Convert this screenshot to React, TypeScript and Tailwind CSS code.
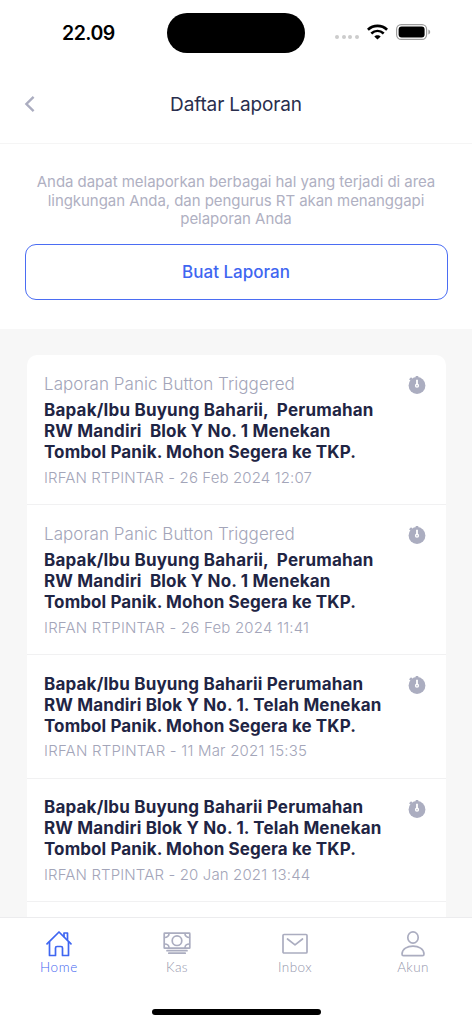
import type { ReactNode } from 'react'
import clsx from 'clsx'

interface Line {
  text: string
  tracking: string
}

interface Laporan {
  id: number
  judul?: Line
  isi: Line[]
  meta: Line
}

const DESKRIPSI: Line[] = [
  { text: 'Anda dapat melaporkan berbagai hal yang terjadi di area', tracking: 'tracking-[-0.05px]' },
  { text: 'lingkungan Anda, dan pengurus RT akan menanggapi', tracking: 'tracking-[-0.05px]' },
  { text: 'pelaporan Anda', tracking: 'tracking-[-0.05px]' },
]

const JUDUL: Line = { text: 'Laporan Panic Button Triggered', tracking: 'tracking-[0.04px]' }

const ISI_BARU: Line[] = [
  { text: 'Bapak/Ibu Buyung Baharii,  Perumahan', tracking: 'tracking-[0.2px]' },
  { text: 'RW Mandiri  Blok Y No. 1 Menekan', tracking: 'tracking-[0.15px]' },
  { text: 'Tombol Panik. Mohon Segera ke TKP.', tracking: 'tracking-[0.1px]' },
]

const ISI_LAMA: Line[] = [
  { text: 'Bapak/Ibu Buyung Baharii Perumahan', tracking: 'tracking-[0.18px]' },
  { text: 'RW Mandiri Blok Y No. 1. Telah Menekan', tracking: 'tracking-[0.14px]' },
  { text: 'Tombol Panik. Mohon Segera ke TKP.', tracking: 'tracking-[0.1px]' },
]

const LAPORAN: Laporan[] = [
  { id: 1, judul: JUDUL, isi: ISI_BARU, meta: { text: 'IRFAN RTPINTAR - 26 Feb 2024 12:07', tracking: 'tracking-[0.12px]' } },
  { id: 2, judul: JUDUL, isi: ISI_BARU, meta: { text: 'IRFAN RTPINTAR - 26 Feb 2024 11:41', tracking: 'tracking-[0.2px]' } },
  { id: 3, isi: ISI_LAMA, meta: { text: 'IRFAN RTPINTAR - 11 Mar 2021 15:35', tracking: 'tracking-[0.22px]' } },
  { id: 4, isi: ISI_LAMA, meta: { text: 'IRFAN RTPINTAR - 20 Jan 2021 13:44', tracking: 'tracking-[0.13px]' } },
]

function StatusBar() {
  return (
    <div className="flex h-[65px] shrink-0 items-center">
      <div className="w-[167px] pl-[62px] text-[19.5px] font-semibold leading-6 tracking-[-0.5px] text-black">22.09</div>
      <div className="h-10 w-[138px] rounded-full bg-black" />
      <div className="flex flex-1 items-center pl-[30px]">
        <div className="mt-[9px] flex gap-[2.5px]">
          {[0, 1, 2, 3].map((i) => (
            <span key={i} className="h-1 w-1 rounded-full bg-[#cccccc]" />
          ))}
        </div>
        <svg className="mb-[2px] ml-2 h-[16px] w-[21px]" viewBox="0 0 21 16" fill="none">
          <path d="M.9 5.700C6.400.7 14.600.7 20.100 5.700" stroke="#000" strokeWidth="2.800" />
          <path d="M4.300 9.500C8 6.200 13 6.200 16.700 9.500" stroke="#000" strokeWidth="2.600" />
          <path d="M7.300 12.400C9 10.700 12 10.700 13.700 12.400L10.500 15.600Z" fill="#000" />
        </svg>
        <svg className="mb-[2px] ml-[8px] h-4 w-[35px]" viewBox="0 0 35 16" fill="none">
          <rect x=".6" y=".6" width="30" height="14.800" rx="4.600" stroke="#9d9d9d" strokeWidth="1.200" />
          <rect x="2.600" y="2.500" width="26" height="11" rx="3" fill="#000" />
          <path d="M32.400 5.500C34.800 6.500 34.800 9.500 32.400 10.500Z" fill="#9d9d9d" />
        </svg>
      </div>
    </div>
  )
}

function StopwatchIcon() {
  return (
    <svg className="h-[18px] w-[18px] shrink-0" viewBox="0 0 18 18" fill="none">
      <circle cx="9" cy="9.500" r="8.400" fill="#abadc0" />
      <path d="M7.700 0H10.300V2.500H7.700Z" fill="#abadc0" />
      <path d="M1.800 4L3.800 2" stroke="#abadc0" strokeWidth="2" />
      <path d="M9 3.800V8.500" stroke="#fff" strokeWidth="1.800" />
      <circle cx="9" cy="9.700" r="1.400" stroke="#fff" strokeWidth="1.400" />
    </svg>
  )
}

function LaporanItem({ item }: { item: Laporan }) {
  return (
    <div
      className={clsx(
        'flex shrink-0 justify-between border-b-[1.5px] border-[#f1f1f2] pl-[17.5px] pr-5 pt-[18.5px]',
        item.judul ? 'h-[150px]' : 'h-[123.5px]',
      )}
    >
      <div className="whitespace-pre">
        {item.judul && (
          <div className={clsx('mb-[5.5px] text-[17px] font-light leading-[21px] text-[#a3a5b9]', item.judul.tracking)}>{item.judul.text}</div>
        )}
        {item.isi.map((line) => (
          <div key={line.text} className={clsx('text-[17px] font-bold leading-[21px] text-[#1f2544]', line.tracking)}>
            {line.text}
          </div>
        ))}
        <div className={clsx('mt-[4.5px] text-[15px] font-light leading-[19px] text-[#a3a5b9]', item.meta.tracking)}>{item.meta.text}</div>
      </div>
      <div className="pt-[2.5px]">
        <StopwatchIcon />
      </div>
    </div>
  )
}

function NavItem({ label, active, tracking, children }: { label: string; active?: boolean; tracking: string; children: ReactNode }) {
  return (
    <button type="button" className={clsx('flex flex-1 flex-col items-center', active ? 'text-[#3f66f1]' : 'text-[#abadc0]')}>
      <svg className="h-7 w-7" viewBox="0 0 28 28" fill="none" stroke="currentColor" strokeWidth="1.700" strokeLinecap="round" strokeLinejoin="round">
        {children}
      </svg>
      <span
        className={clsx(
          "mt-px font-['Lato',sans-serif] text-[13.5px] font-light leading-4",
          active ? 'text-[#3f66f1]' : 'text-[#9496ac]',
          tracking,
        )}
      >
        {label}
      </span>
    </button>
  )
}

export default function App() {
  return (
    <div className="flex h-[1024px] w-[472px] flex-col overflow-hidden bg-white font-['Inter','Liberation_Sans',sans-serif]">
      <StatusBar />

      <header className="flex h-[78.5px] shrink-0 items-center border-b-[1.5px] border-[#f5f5f5] pl-[24px] pr-[36px]">
        <svg className="h-[18px] w-3" viewBox="0 0 12 18" fill="none">
          <path d="M9.600 1.800L2.400 9L9.600 16.200" stroke="#abadc0" strokeWidth="2.400" />
        </svg>
        <h1 className="flex-1 pt-0.5 text-center text-[19px] leading-6 tracking-[-0.13px] text-[#292e4d]">Daftar Laporan</h1>
      </header>

      <section className="flex h-[185.5px] shrink-0 flex-col px-[24.5px] pt-[29.5px]">
        <div className="whitespace-pre text-center text-[15px] leading-[18.500px] text-[#afb0c2]">
          {DESKRIPSI.map((line) => (
            <p key={line.text} className={line.tracking}>{line.text}</p>
          ))}
        </div>
        <button
          type="button"
          className="mt-[15.500px] h-14 shrink-0 rounded-[11px] border-[1.500px] border-[#4b6df3] pt-0.5 text-[17px] font-medium text-[#3f66f1]"
        >
          Buat Laporan
        </button>
      </section>

      <main className="flex min-h-0 flex-1 flex-col overflow-hidden bg-[#f7f7f7] px-[26.5px] pt-[26px]">
        <div className="flex min-h-0 flex-1 flex-col overflow-hidden rounded-t-[10px] bg-white">
          {LAPORAN.map((item) => (
            <LaporanItem key={item.id} item={item} />
          ))}
        </div>
      </main>

      <nav className="flex h-[89px] shrink-0 border-t border-[#ececee] pt-[12px]">
        <NavItem label="Home" active tracking="tracking-[0.7px]">
          <path d="M2 13.800L14 2L26 13.800" />
          <path d="M4.500 12V25.500H10.500V18C10.500 17 11 16.500 12 16.500H16C17 16.500 17.500 17 17.500 18V25.500H23.500V12" />
          <path d="M19 6.500V3H22.500V9.500" />
        </NavItem>
        <NavItem label="Kas" tracking="tracking-[0.4px]">
          <rect x="1.200" y="3.200" width="25.600" height="15" rx=".5" />
          <circle cx="14" cy="10.700" r="4.800" />
          <path d="M6 3.700C6 6 4 7.500 1.700 7.500M22 3.700C22 6 24 7.500 26.300 7.500M6 17.700C6 15.500 4 14 1.700 14M22 17.700C22 15.500 24 14 26.300 14" />
          <path d="M4 20.700H24M5.800 23.200H22.200" />
        </NavItem>
        <NavItem label="Inbox" tracking="tracking-[0.4px]">
          <rect x="2" y="4.500" width="24" height="18.500" rx="1" />
          <path d="M6.500 9L14 14.800L21.500 9" />
        </NavItem>
        <NavItem label="Akun" tracking="tracking-[0.4px]">
          <ellipse cx="14" cy="7.500" rx="5.200" ry="5.700" />
          <path d="M3 24C3 13.500 25 13.500 25 24C25 25 24.500 25.700 23.500 25.700H4.500C3.500 25.700 3 25 3 24Z" />
        </NavItem>
      </nav>

      <div className="flex h-[18px] shrink-0 justify-center pt-[3px]">
        <div className="h-[6px] w-[169px] rounded-full bg-black" />
      </div>
    </div>
  )
}
